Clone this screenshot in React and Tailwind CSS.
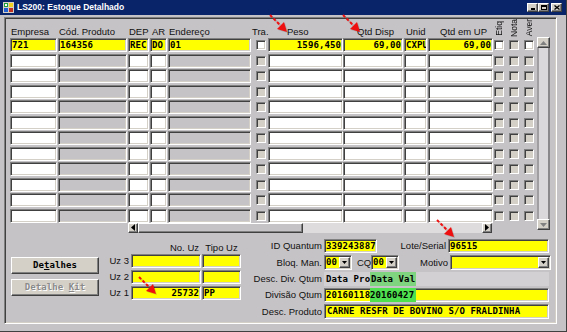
import React from 'react';

const sunk =
  'border border-t-[#808080] border-l-[#808080] border-r-white border-b-white shadow-[inset_1px_1px_0_#404040,inset_-1px_-1px_0_#d4d0c8]';
const raised =
  'border border-t-white border-l-white border-r-[#404040] border-b-[#404040] shadow-[inset_-1px_-1px_0_#808080]';
const mono = "font-['DejaVu_Sans_Mono',monospace] font-bold text-[9px] leading-[10px] tracking-[0.1px]";
const label = "font-['Liberation_Sans',Arial,sans-serif] text-[9.5px] leading-[11px] text-[#111]";

const cols = [
  { key: 'emp', cls: 'ml-[4px] w-[47px]', head: 'Empresa', hcls: 'pl-[1px]', empty: 'bg-white' },
  { key: 'cod', cls: 'ml-[1px] w-[69px]', head: 'Cód. Produto', hcls: 'pl-[1px]', empty: 'bg-[#c6c3c6]' },
  { key: 'dep', cls: 'ml-[1px] w-[21px]', head: 'DEP', hcls: 'pl-[1px]', empty: 'bg-white' },
  { key: 'ar', cls: 'ml-[1px] w-[17px]', head: 'AR', hcls: 'pl-[2px]', empty: 'bg-white' },
  { key: 'end', cls: 'ml-[1px] w-[83px]', head: 'Endereço', hcls: 'pl-[1px]', empty: 'bg-[#c6c3c6]' },
  { key: 'tra', cls: 'w-[16px]', head: 'Tra.', hcls: 'pl-[1px]', check: true },
  { key: 'peso', cls: 'ml-[1px] w-[75px]', head: 'Peso', hcls: 'pl-[19px]', empty: 'bg-white', right: true },
  { key: 'disp', cls: 'w-[60px]', head: 'Qtd Disp', hcls: 'pl-[14px]', empty: 'bg-white', right: true },
  { key: 'unid', cls: 'ml-[1px] w-[23px]', head: 'Unid', hcls: 'pl-[2px]', empty: 'bg-white' },
  { key: 'up', cls: 'ml-[1px] w-[65px]', head: 'Qtd em UP', hcls: 'pl-[12px]', empty: 'bg-white', right: true },
];

const first = {
  emp: '721',
  cod: '164356',
  dep: 'REC',
  ar: 'DO',
  end: '01',
  peso: '1596,450',
  disp: '69,00',
  unid: 'CXPU',
  up: '69,00',
};

function Check({ cls = '', on }) {
  return (
    <div
      className={`${cls} w-[10px] h-[10px] shrink-0 ${sunk} ${on ? 'bg-white' : 'bg-[#d4d0c8]'}`}
    />
  );
}

function Tri({ dir }) {
  const pts = { up: '0,4 3.5,0 7,4', down: '0,0 7,0 3.5,4', left: '4,0 4,7 0,3.5', right: '0,0 0,7 4,3.5' }[dir];
  const w = dir === 'up' || dir === 'down' ? 7 : 4;
  const h = dir === 'up' || dir === 'down' ? 4 : 7;
  return (
    <svg width={w} height={h} viewBox={`0 0 ${w} ${h}`}>
      <polygon points={pts} fill={dir === 'up' || dir === 'down' ? '#808080' : '#000'} />
    </svg>
  );
}

function GridRow({ data }) {
  return (
    <div className="flex h-[14px] items-stretch">
      {cols.map((c) => {
        if (c.check) {
          return (
            <div key={c.key} className={`${c.cls} flex items-center`}>
              <Check cls="ml-[5px]" on={!!data} />
            </div>
          );
        }
        const bg = data ? 'bg-[#ffff00]' : c.empty;
        return (
          <div
            key={c.key}
            className={`${c.cls} h-full shrink-0 ${sunk} ${bg} p-px overflow-hidden whitespace-nowrap ${mono} ${c.right ? 'text-right' : ''}`}
          >
            {data ? data[c.key] : ''}
          </div>
        );
      })}
      <div className="ml-[1px] flex items-center">
        <Check on={!!data} />
        <Check cls="ml-[5px]" on={false} />
        <Check cls="ml-[5px]" on={!!data} />
      </div>
    </div>
  );
}

function Arrow({ cls }) {
  return (
    <svg className={`absolute pointer-events-none ${cls}`} width="22" height="22" viewBox="0 0 22 22">
      <line x1="3" y1="3" x2="13" y2="13" stroke="#7a3a3a" strokeOpacity="0.25" strokeWidth="2" strokeDasharray="3 2" />
      <line x1="2" y1="2" x2="12" y2="12" stroke="#f01010" strokeWidth="2" strokeDasharray="3 2" />
      <polygon points="20,20 10,17 17,10" fill="#000" fillOpacity="0.15" />
      <polygon points="19,19 9,16 16,9" fill="#ee1010" />
    </svg>
  );
}

function TitleBar() {
  return (
    <div className="h-[15px] shrink-0 bg-[#0a246a] flex items-center pl-[3px] pr-[4px]">
      <svg width="11" height="11" viewBox="0 0 11 11">
        <rect x="0" y="0" width="11" height="11" fill="#d4d0c8" />
        <rect x="1" y="1" width="4" height="4" fill="#1e9e3c" />
        <rect x="6" y="1" width="4" height="4" fill="#f0d020" />
        <rect x="1" y="6" width="4" height="4" fill="#2060d0" />
        <rect x="6" y="6" width="4" height="4" fill="#c03020" />
        <rect x="2" y="2" width="2" height="2" fill="#ffffff" />
      </svg>
      <span className="ml-[3px] text-white font-bold text-[8.5px] leading-[11px] font-['Liberation_Sans',Arial,sans-serif]">
        LS200: Estoque Detalhado
      </span>
      <div className="ml-auto flex items-center">
        <div className={`w-[11px] h-[9px] bg-[#d4d0c8] ${raised} flex items-end justify-center pb-[1px]`}>
          <div className="w-[4px] h-[2px] bg-black" />
        </div>
        <div className={`w-[11px] h-[9px] bg-[#d4d0c8] ${raised} flex items-center justify-center`}>
          <div className="w-[6px] h-[5px] border border-black border-t-2" />
        </div>
        <div className={`ml-[2px] w-[11px] h-[9px] bg-[#d4d0c8] ${raised} flex items-center justify-center`}>
          <svg width="6" height="5" viewBox="0 0 6 5">
            <path d="M0.5 0.5 L5.5 4.5 M5.5 0.5 L0.5 4.5" stroke="#000" strokeWidth="1.3" />
          </svg>
        </div>
      </div>
    </div>
  );
}

function Drop({ cls, value }) {
  return (
    <div className={`${cls} h-full shrink-0 ${sunk} bg-[#ffff00] p-px flex`}>
      <span className={`flex-1 overflow-hidden whitespace-nowrap ${mono}`}>{value}</span>
      <div className={`w-[11px] h-full bg-[#d4d0c8] ${raised} flex items-center justify-center`}>
        <svg width="5" height="3" viewBox="0 0 5 3">
          <polygon points="0,0 5,0 2.5,3" fill="#000" />
        </svg>
      </div>
    </div>
  );
}

function Lbl({ cls, children }) {
  return <div className={`${cls} shrink-0 text-right whitespace-nowrap ${label}`}>{children}</div>;
}

export default function App() {
  const rows = Array.from({ length: 12 }, (_, i) => i);
  return (
    <div className="relative w-[567px] h-[332px] overflow-hidden bg-[#c6c3c6] flex flex-col border-r border-b border-r-[#404040] border-b-[#404040]">
      <TitleBar />
      <div className={`mt-[2px] ml-[4px] w-[553px] h-[307px] ${sunk} p-px flex flex-col`}>
        {/* grid header */}
        <div className="h-[19px] flex items-end pb-[1px] shrink-0">
          {cols.map((c) => (
            <div key={c.key} className={`${c.cls} ${c.hcls} shrink-0 whitespace-nowrap ${label}`}>
              {c.head}
            </div>
          ))}
          <div className="ml-[1px] flex items-end">
            {['Etiq', 'Nota', 'Aver'].map((t, i) => (
              <div key={t} className={`${i ? 'ml-[5px]' : ''} w-[10px] h-[18px] flex items-center justify-center`}>
                <span
                  className={`font-['Liberation_Sans',Arial,sans-serif] text-[8.5px] leading-[10px] text-[#111] whitespace-nowrap [writing-mode:vertical-rl] rotate-180`}
                >
                  {t}
                </span>
              </div>
            ))}
          </div>
        </div>

        {/* grid body */}
        <div className="flex shrink-0">
          <div className="flex flex-col">
            <div className="flex flex-col gap-[1.5px]">
              {rows.map((i) => (
                <GridRow key={i} data={i === 0 ? first : null} />
              ))}
            </div>
            <div className="ml-[122px] w-[364px] h-[10px] flex bg-[#dedcdc]">
              <div className={`w-[10px] h-full bg-[#d4d0c8] ${raised} flex items-center justify-center`}>
                <Tri dir="left" />
              </div>
              <div className={`w-[165px] h-full bg-[#c6c3c6] ${raised}`} />
              <div className="flex-1" />
              <div className={`w-[10px] h-full bg-[#d4d0c8] ${raised} flex items-center justify-center`}>
                <Tri dir="right" />
              </div>
            </div>
          </div>
          <div className="ml-[3px] -mt-[1px] w-[13px] h-[193px] flex flex-col">
            <div className={`h-[11px] bg-[#d4d0c8] ${raised} flex items-center justify-center`}>
              <Tri dir="up" />
            </div>
            <div className="flex-1 bg-[#dad8da] border-l-2 border-r-2 border-l-[#a09ea0] border-r-[#8a888a]" />
            <div className={`h-[11px] bg-[#d4d0c8] ${raised} flex items-center justify-center`}>
              <Tri dir="down" />
            </div>
          </div>
        </div>

        {/* lower section */}
        <div className="flex">
          <div className="ml-[5px] w-[88px] mt-[24px] flex flex-col gap-[5px]">
            <div className={`h-[17px] bg-[#d4d0c8] ${raised} flex items-center justify-center ${mono}`}>
              <span>
                De<span className="underline">t</span>alhes
              </span>
            </div>
            <div
              className={`h-[17px] bg-[#d4d0c8] ${raised} flex items-center justify-center ${mono} text-[#8a8a8a] [text-shadow:1px_1px_0_#ffffff]`}
            >
              <span>
                Detalhe <span className="underline">K</span>it
              </span>
            </div>
          </div>

          <div className="ml-[10px] mt-[6px] flex flex-col">
            <div className="h-[14px] flex items-end">
              <div className="w-[20px]" />
              <div className={`ml-[2px] w-[70px] pr-[2px] text-right ${label}`}>No. Uz</div>
              <div className={`ml-[1px] w-[39px] text-center ${label}`}>Tipo Uz</div>
            </div>
            <div className="mt-[1px] flex flex-col gap-[1.5px]">
              {[
                ['Uz 3', '', ''],
                ['Uz 2', '', ''],
                ['Uz 1', '25732', 'PP'],
              ].map(([l, n, t]) => (
                <div key={l} className="h-[14.5px] flex items-center">
                  <Lbl cls="w-[20px]">{l}</Lbl>
                  <div className={`ml-[2px] w-[70px] h-full ${sunk} bg-[#ffff00] p-px text-right ${mono}`}>{n}</div>
                  <div className={`ml-[1px] w-[39px] h-full ${sunk} bg-[#ffff00] p-px ${mono}`}>{t}</div>
                </div>
              ))}
            </div>
          </div>

          <div className="ml-[9px] mt-[6px] flex flex-col gap-[2px]">
            <div className="h-[14px] flex items-center">
              <Lbl cls="w-[72px]">ID Quantum</Lbl>
              <div className={`ml-[2px] w-[53px] h-full ${sunk} bg-[#ffff00] p-px ${mono} overflow-hidden`}>339243887</div>
              <Lbl cls="w-[70px] pr-[1px]">Lote/Serial</Lbl>
              <div className={`ml-[1px] w-[101px] h-full ${sunk} bg-[#ffff00] p-px ${mono}`}>96515</div>
            </div>
            <div className="h-[15px] flex items-center">
              <Lbl cls="w-[72px]">Bloq. Man.</Lbl>
              <Drop cls="ml-[2px] w-[28px]" value="00" />
              <Lbl cls="ml-[5px] w-[12px]">CQ</Lbl>
              <Drop cls="ml-[2px] w-[28px]" value="00" />
              <Lbl cls="w-[50px] pr-[1px]">Motivo</Lbl>
              <Drop cls="ml-[1px] w-[101px]" value="" />
            </div>
            <div className="h-[14px] flex items-center">
              <Lbl cls="w-[72px]">Desc. Div. Qtum</Lbl>
              <div className={`ml-[2px] w-[46px] h-full bg-[#d2d0d2] pl-[2px] pt-[2px] overflow-hidden whitespace-nowrap ${mono}`}>
                Data Pro
              </div>
              <div className={`w-[46px] h-full bg-[#7fd47f] pl-[1px] pt-[2px] overflow-hidden whitespace-nowrap ${mono}`}>
                Data Val
              </div>
              <div className="w-[133px] h-full bg-[#d2d0d2]" />
            </div>
            <div className="h-[14px] flex items-center">
              <Lbl cls="w-[72px]">Divisão Qtum</Lbl>
              <div
                className={`ml-[2px] w-[46px] h-full bg-[#ffff00] border border-r-0 border-t-[#808080] border-l-[#808080] border-b-white shadow-[inset_1px_1px_0_#404040] pl-[1px] pt-px overflow-hidden whitespace-nowrap ${mono}`}
              >
                20160118
              </div>
              <div className={`w-[46px] h-full bg-[#4fe04f] pt-[2px] overflow-hidden whitespace-nowrap ${mono}`}>
                20160427
              </div>
              <div
                className="w-[133px] h-full bg-[#ffff00] border border-l-0 border-t-[#808080] border-r-white border-b-white shadow-[inset_0_1px_0_#404040,inset_-1px_-1px_0_#d4d0c8]"
              />
            </div>
            <div className="h-[15px] flex items-center">
              <Lbl cls="w-[72px]">Desc. Produto</Lbl>
              <div className={`ml-[2px] w-[225px] h-full ${sunk} bg-[#ffff00] p-px pl-[2px] whitespace-nowrap overflow-hidden ${mono}`}>
                CARNE RESFR DE BOVINO S/O FRALDINHA
              </div>
            </div>
          </div>
        </div>
      </div>

      <Arrow cls="left-[268px] top-[13px]" />
      <Arrow cls="left-[341px] top-[13px]" />
      <Arrow cls="left-[435px] top-[218px]" />
      <Arrow cls="left-[137px] top-[275px]" />
    </div>
  );
}
